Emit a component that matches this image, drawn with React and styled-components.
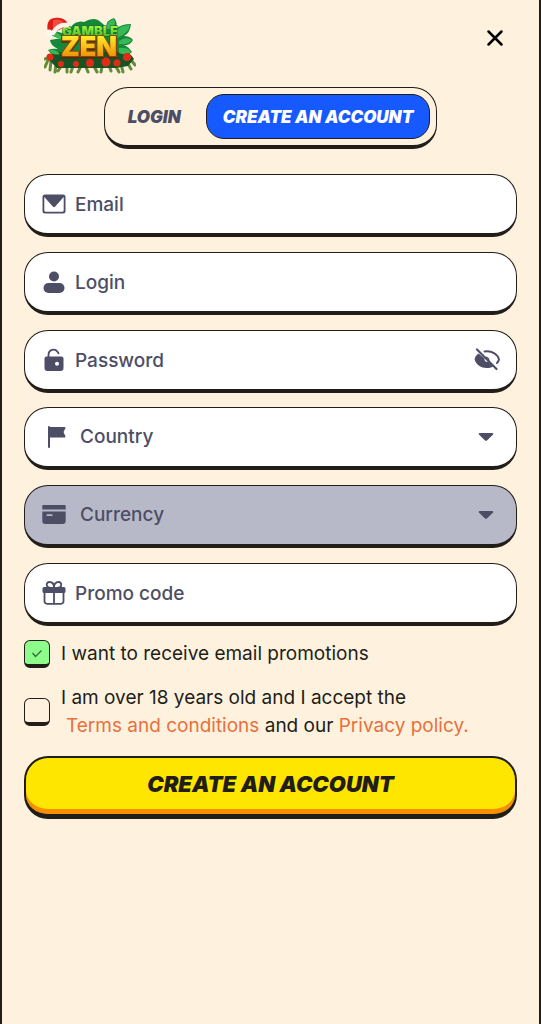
import React, { useState } from "react";
import styled, { createGlobalStyle, css } from "styled-components";

const ink = "#211d19";
const slate = "#4d4e66";
const cream = "#fef2de";

const GlobalStyle = createGlobalStyle`
  *, *::before, *::after { box-sizing: border-box; }
  body { margin: 0; background: ${cream}; }
  button, input, select { font: inherit; color: inherit; margin: 0; }
`;

const Page = styled.main`
  min-height: 100vh;
  padding: 16px 22px 24px;
  border: solid ${ink};
  border-width: 0 2px;
  background: ${cream};
  color: ${ink};
  font: 400 19px/28px Inter, "Liberation Sans", sans-serif;
`;

const Header = styled.header`
  display: flex;
  align-items: flex-start;
  justify-content: space-between;
  padding: 0 8px 0 20px;
`;

const IconButton = styled.button`
  display: flex;
  align-items: center;
  justify-content: center;
  padding: 0;
  border: 0;
  background: none;
  cursor: pointer;
`;

const CloseButton = styled(IconButton)`
  width: 28px;
  height: 44px;
`;

const Tabs = styled.nav`
  display: flex;
  width: fit-content;
  margin: 11px auto 25px;
  padding: 6px;
  border: 1px solid ${ink};
  border-bottom-width: 4px;
  border-radius: 24px;
`;

const Tab = styled.button`
  height: 45px;
  padding: 0 16px;
  border: 1px solid transparent;
  border-radius: 18px;
  background: none;
  color: ${slate};
  font: italic 900 17px/20px Inter, sans-serif;
  text-transform: uppercase;
  cursor: pointer;
  ${(p) =>
    p.$active
      ? css`
          background: #1659ff;
          border-color: ${ink};
          color: #fff;
        `
      : css`
          padding-right: 24px;
        `}
`;

const Form = styled.form`
  display: flex;
  flex-direction: column;
`;

const FieldGroup = styled.div`
  display: flex;
  flex-direction: column;
  gap: 15px;
  margin-bottom: 14px;
`;

const Field = styled.label`
  display: flex;
  align-items: center;
  gap: ${(p) => (p.$wide ? 14 : 9)}px;
  height: 63px;
  padding: 0 ${(p) => (p.$wide ? 22 : 16)}px 0 17px;
  border: 1px solid ${ink};
  border-bottom-width: 4px;
  border-radius: 24px;
  background: ${(p) => (p.$disabled ? "#b7b9c8" : "#fff")};
  color: ${slate};
  font-weight: 500;
  svg { flex: none; }
`;

const controlStyle = css`
  flex: 1;
  min-width: 0;
  height: 100%;
  padding: 0;
  border: 0;
  outline: 0;
  background: none;
  color: ${slate};
  appearance: none;
`;

const TextInput = styled.input`
  ${controlStyle}
  &::placeholder { color: ${slate}; opacity: 1; }
`;

const Select = styled.select`
  ${controlStyle}
  opacity: 1;
`;

const CheckRow = styled.div`
  display: flex;
  align-items: center;
  gap: 11px;
  margin-bottom: 16px;
`;

const CheckBoxFrame = styled.span`
  display: grid;
  flex: none;
  > * { grid-area: 1 / 1; }
  svg { place-self: center; pointer-events: none; }
`;

const CheckBox = styled.input`
  width: 26px;
  height: 28px;
  appearance: none;
  border: 1px solid ${ink};
  border-bottom-width: 4px;
  border-radius: 6px;
  cursor: pointer;
  &:checked { background: #8dfc8b; }
`;

const Link = styled.a`
  color: #e8703c;
  text-decoration: none;
`;

const TermsLink = styled(Link)`
  margin-left: 5px;
`;

const SubmitButton = styled.button`
  height: 63px;
  padding: 0 16px 4px;
  border: 2px solid ${ink};
  border-bottom-width: 5px;
  border-radius: 24px;
  background: #ffe600;
  box-shadow: inset 0 -5px 0 #f98e00;
  font: italic 900 22px/28px Inter, sans-serif;
  text-transform: uppercase;
  cursor: pointer;
`;

const LogoWord = styled.text`
  font-family: Inter, sans-serif;
  font-weight: 900;
  text-anchor: middle;
  paint-order: stroke;
`;

function Logo() {
  return (
    <svg width="92" height="60" viewBox="0 0 92 60" role="img" aria-label="Gamble Zen">
      <defs>
        <linearGradient id="gold" x1="0" y1="0" x2="0" y2="1">
          <stop offset="0.2" stopColor="#ffe92c" />
          <stop offset="0.8" stopColor="#ee9208" />
        </linearGradient>
        <linearGradient id="lime" x1="0" y1="0" x2="0" y2="1">
          <stop offset="0.2" stopColor="#a5f13b" />
          <stop offset="1" stopColor="#2ead24" />
        </linearGradient>
        <filter id="depth">
          <feDropShadow dx="0" dy="1.500" stdDeviation="0.200" floodColor="#5b2806" />
        </filter>
      </defs>
      <path
        d="M4 44 1 51M7 45 6 54M12 48 11 56M18 49 14 55M23 49 23 56M29 50 27 56M37 50 34 56M42 51 44 56M50 50 53 56M58 51 57 56M65 49 67 55M71 49 75 56M77 48 79 56M83 46 87 53M87 44 91 49M5 41 1 43"
        stroke="#648b38"
        strokeWidth="3"
        strokeLinecap="round"
      />
      <g fill="#15883a">
        <path d="M18 22Q7 22 3 14Q9 14 18 17L26 12Q32 4 40 6Q48 1 54 4Q61 9 62 12Q62 4 70 2Q74 6 72 13Q77 8 87 8Q86 17 80 20Q86 20 89 24Q86 30 80 29Q85 31 88 36Q83 41 75 41L16 42Q8 40 4 34Q8 32 14 33Q6 29 6 24Z" />
      </g>
      <path d="M4 43Q8 35 17 36H76Q86 35 90 43L84 50 72 52H13Z" fill="#185423" />
      <g fill="#39b856">
        <path d="M72 15Q76 9 86 9Q85 17 73 22Z" />
        <path d="M75 25Q82 20 88 24Q85 29 75 28Z" />
        <path d="M75 32Q84 31 87 36Q82 40 75 37Z" />
        <path d="M4 15Q11 14 17 20L17 23Q8 21 4 15Z" />
        <path d="M63 13Q62 5 70 3Q73 9 67 13Z" />
        <path d="M5 34Q11 33 16 38Q9 40 5 34Z" />
      </g>
      <g fill="#e12b16">
        <circle cx="6" cy="41" r="3.500" />
        <circle cx="17" cy="48" r="3" />
        <circle cx="32" cy="48" r="3" />
        <circle cx="46" cy="47" r="4" />
        <circle cx="62" cy="46" r="4.500" />
        <circle cx="73" cy="47" r="3.500" />
        <circle cx="83" cy="41" r="4" />
      </g>
      <LogoWord x="46" y="20" fontSize="13" fill="url(#lime)" stroke="#136326" strokeWidth="1">
        GAMBLE
      </LogoWord>
      <LogoWord x="45" y="40" fontSize="27" fill="url(#gold)" stroke="#8a470b" strokeWidth="2" filter="url(#depth)">
        ZEN
      </LogoWord>
      <path d="M4 16C2 7 5 2 11 2 18 1 23 4 24 9L8 18Z" fill="#df1d18" />
      <path d="M9 4Q17 2 21 8L9 14Z" fill="#f34b3c" />
      <path d="M9 17Q14 8 23 9" fill="none" stroke="#fff2ea" strokeWidth="4.500" strokeLinecap="round" />
      <circle cx="5" cy="17" r="3.500" fill="#fff4ef" />
    </svg>
  );
}

const Icon = ({ size = 24, children }) => (
  <svg width={size} height={size} viewBox="0 0 24 24" fill={slate} aria-hidden="true">
    {children}
  </svg>
);

const MailIcon = () => (
  <Icon>
    <path fillRule="evenodd" d="M3 2.500h18a2.500 2.500 0 0 1 2.500 2.500v14a2.500 2.500 0 0 1-2.500 2.500H3A2.500 2.500 0 0 1 .500 19V5A2.500 2.500 0 0 1 3 2.500ZM2.300 5v13.500c0 .700.500 1.200 1.200 1.200h17c.700 0 1.200-.500 1.200-1.200V5l-8.500 9.500a1.600 1.600 0 0 1-2.400 0Z" />
  </Icon>
);

const UserIcon = () => (
  <Icon>
    <circle cx="12" cy="6.500" r="5" />
    <rect x="1.500" y="13" width="21" height="10" rx="5" />
  </Icon>
);

const LockIcon = () => (
  <Icon>
    <path d="M6.500 10V6.500a5 5 0 0 1 9-2.800l1 1.500" fill="none" stroke={slate} strokeWidth="1.800" strokeLinecap="round" />
    <path fillRule="evenodd" d="M4.500 8.500h15a2 2 0 0 1 2 2V20a3 3 0 0 1-3 3h-13a3 3 0 0 1-3-3v-9.500a2 2 0 0 1 2-2ZM15 13.700a2 2 0 1 0 0 4 2 2 0 0 0 0-4Z" />
  </Icon>
);

const FlagIcon = () => (
  <Icon>
    <path d="M7 1a1 1 0 0 1 1 1h14.500c1 0 1.300.800.800 1.500L21.500 7l1.800 4c.300.800 0 1.500-.800 1.500H8V22a1 1 0 0 1-2 0V2a1 1 0 0 1 1-1Z" />
  </Icon>
);

const CardIcon = () => (
  <Icon>
    <path d="M1.500 2h21A1 1 0 0 1 23.700 3V6.500H.300V3A1 1 0 0 1 1.500 2Z" />
    <path fillRule="evenodd" d="M.300 8.500h23.400V18a3 3 0 0 1-3 3H3.300a3 3 0 0 1-3-3Zm5 2.700a.900.900 0 0 0 0 1.800h4.500a.900.900 0 0 0 0-1.800Z" />
  </Icon>
);

const GiftIcon = () => (
  <Icon>
    <g fill="none" stroke={slate} strokeWidth="1.800">
      <path d="M2.500 10.500V20A2.500 2.500 0 0 0 5 22.800h14a2.500 2.500 0 0 0 2.500-2.800v-9.500M12 9v14M7.500 6.500C4 6.500 3.600 1 7.500 1c3 0 4.500 2.500 4.500 5.500C12 3.500 13.500 1 16.500 1c3.900 0 3.500 5.500 0 5.500" />
    </g>
    <rect x="0.500" y="6" width="23" height="6" rx="1.500" />
  </Icon>
);

const EyeOffIcon = () => (
  <svg width="26" height="24" viewBox="0 0 26 24" fill={slate} aria-hidden="true">
    <path fillRule="evenodd" d="M4.500 5.500C2 7.300.800 9.300.600 11.500c1.500 5.300 6.500 8.500 12 8.500 2.500 0 4.500-.500 6.500-1.500l-5-5A2.600 2.600 0 0 1 10.500 10.500Z" />
    <path d="M10.500 3.500C17.500 2 24 6.500 25 11.500c-.300 1.300-1 2.500-2.100 3.500" fill="none" stroke={slate} strokeWidth="1.900" strokeLinecap="round" />
    <path d="M11.500 9.500c2.500-.400 3.500 1.500 3.400 3.500" fill="none" stroke={slate} strokeWidth="1.200" />
    <path d="m3 1.500 19.500 19.500" stroke={slate} strokeWidth="2.200" strokeLinecap="round" />
  </svg>
);

const Caret = () => (
  <svg width="16" height="10" viewBox="0 0 16 10" fill={slate} aria-hidden="true">
    <path d="M2 1h12c1.300 0 1.700 1 .900 1.800L9.200 8.300a1.800 1.800 0 0 1-2.400 0L1.100 2.800C.300 2 .700 1 2 1Z" />
  </svg>
);

function SelectField({ icon, name, disabled }) {
  return (
    <Field $wide $disabled={disabled}>
      {icon}
      <Select aria-label={name} disabled={disabled} defaultValue="">
        <option value="">{name}</option>
      </Select>
      <Caret />
    </Field>
  );
}

export default function App() {
  const [promos, setPromos] = useState(true);
  const [visible, setVisible] = useState(false);

  return (
    <>
      <GlobalStyle />
      <Page>
        <Header>
          <Logo />
          <CloseButton type="button" aria-label="Close">
            <svg width="18" height="18" viewBox="0 0 18 18" aria-hidden="true">
              <path d="m2.500 2.500 13 13m0-13-13 13" stroke="#000" strokeWidth="2.500" strokeLinecap="round" />
            </svg>
          </CloseButton>
        </Header>

        <Tabs>
          <Tab type="button">Login</Tab>
          <Tab type="button" $active>Create an account</Tab>
        </Tabs>

        <Form onSubmit={(e) => e.preventDefault()}>
          <FieldGroup>
            <Field>
              <MailIcon />
              <TextInput type="email" placeholder="Email" aria-label="Email" />
            </Field>
            <Field>
              <UserIcon />
              <TextInput placeholder="Login" aria-label="Login" />
            </Field>
            <Field>
              <LockIcon />
              <TextInput type={visible ? "text" : "password"} placeholder="Password" aria-label="Password" />
              <IconButton type="button" aria-label="Show password" onClick={() => setVisible(!visible)}>
                <EyeOffIcon />
              </IconButton>
            </Field>
          </FieldGroup>
          <FieldGroup>
            <SelectField icon={<FlagIcon />} name="Country" />
            <SelectField icon={<CardIcon />} name="Currency" disabled />
            <Field>
              <GiftIcon />
              <TextInput placeholder="Promo code" aria-label="Promo code" />
            </Field>
          </FieldGroup>

          <CheckRow>
            <CheckBoxFrame>
              <CheckBox id="promos" type="checkbox" checked={promos} onChange={() => setPromos(!promos)} />
              {promos && (
                <svg width="12" height="12" viewBox="0 0 12 12" aria-hidden="true">
                  <path d="m1.500 5 3 3.500 6-6" fill="none" stroke="#2b6b35" strokeWidth="1.200" />
                </svg>
              )}
            </CheckBoxFrame>
            <label htmlFor="promos">I want to receive email promotions</label>
          </CheckRow>
          <CheckRow>
            <CheckBoxFrame>
              <CheckBox id="terms" type="checkbox" />
            </CheckBoxFrame>
            <label htmlFor="terms">
              I am over 18 years old and I accept the
              <br />
              <TermsLink href="#terms">Terms and conditions</TermsLink> and our{" "}
              <Link href="#privacy">Privacy policy.</Link>
            </label>
          </CheckRow>

          <SubmitButton type="submit">Create an account</SubmitButton>
        </Form>
      </Page>
    </>
  );
}
